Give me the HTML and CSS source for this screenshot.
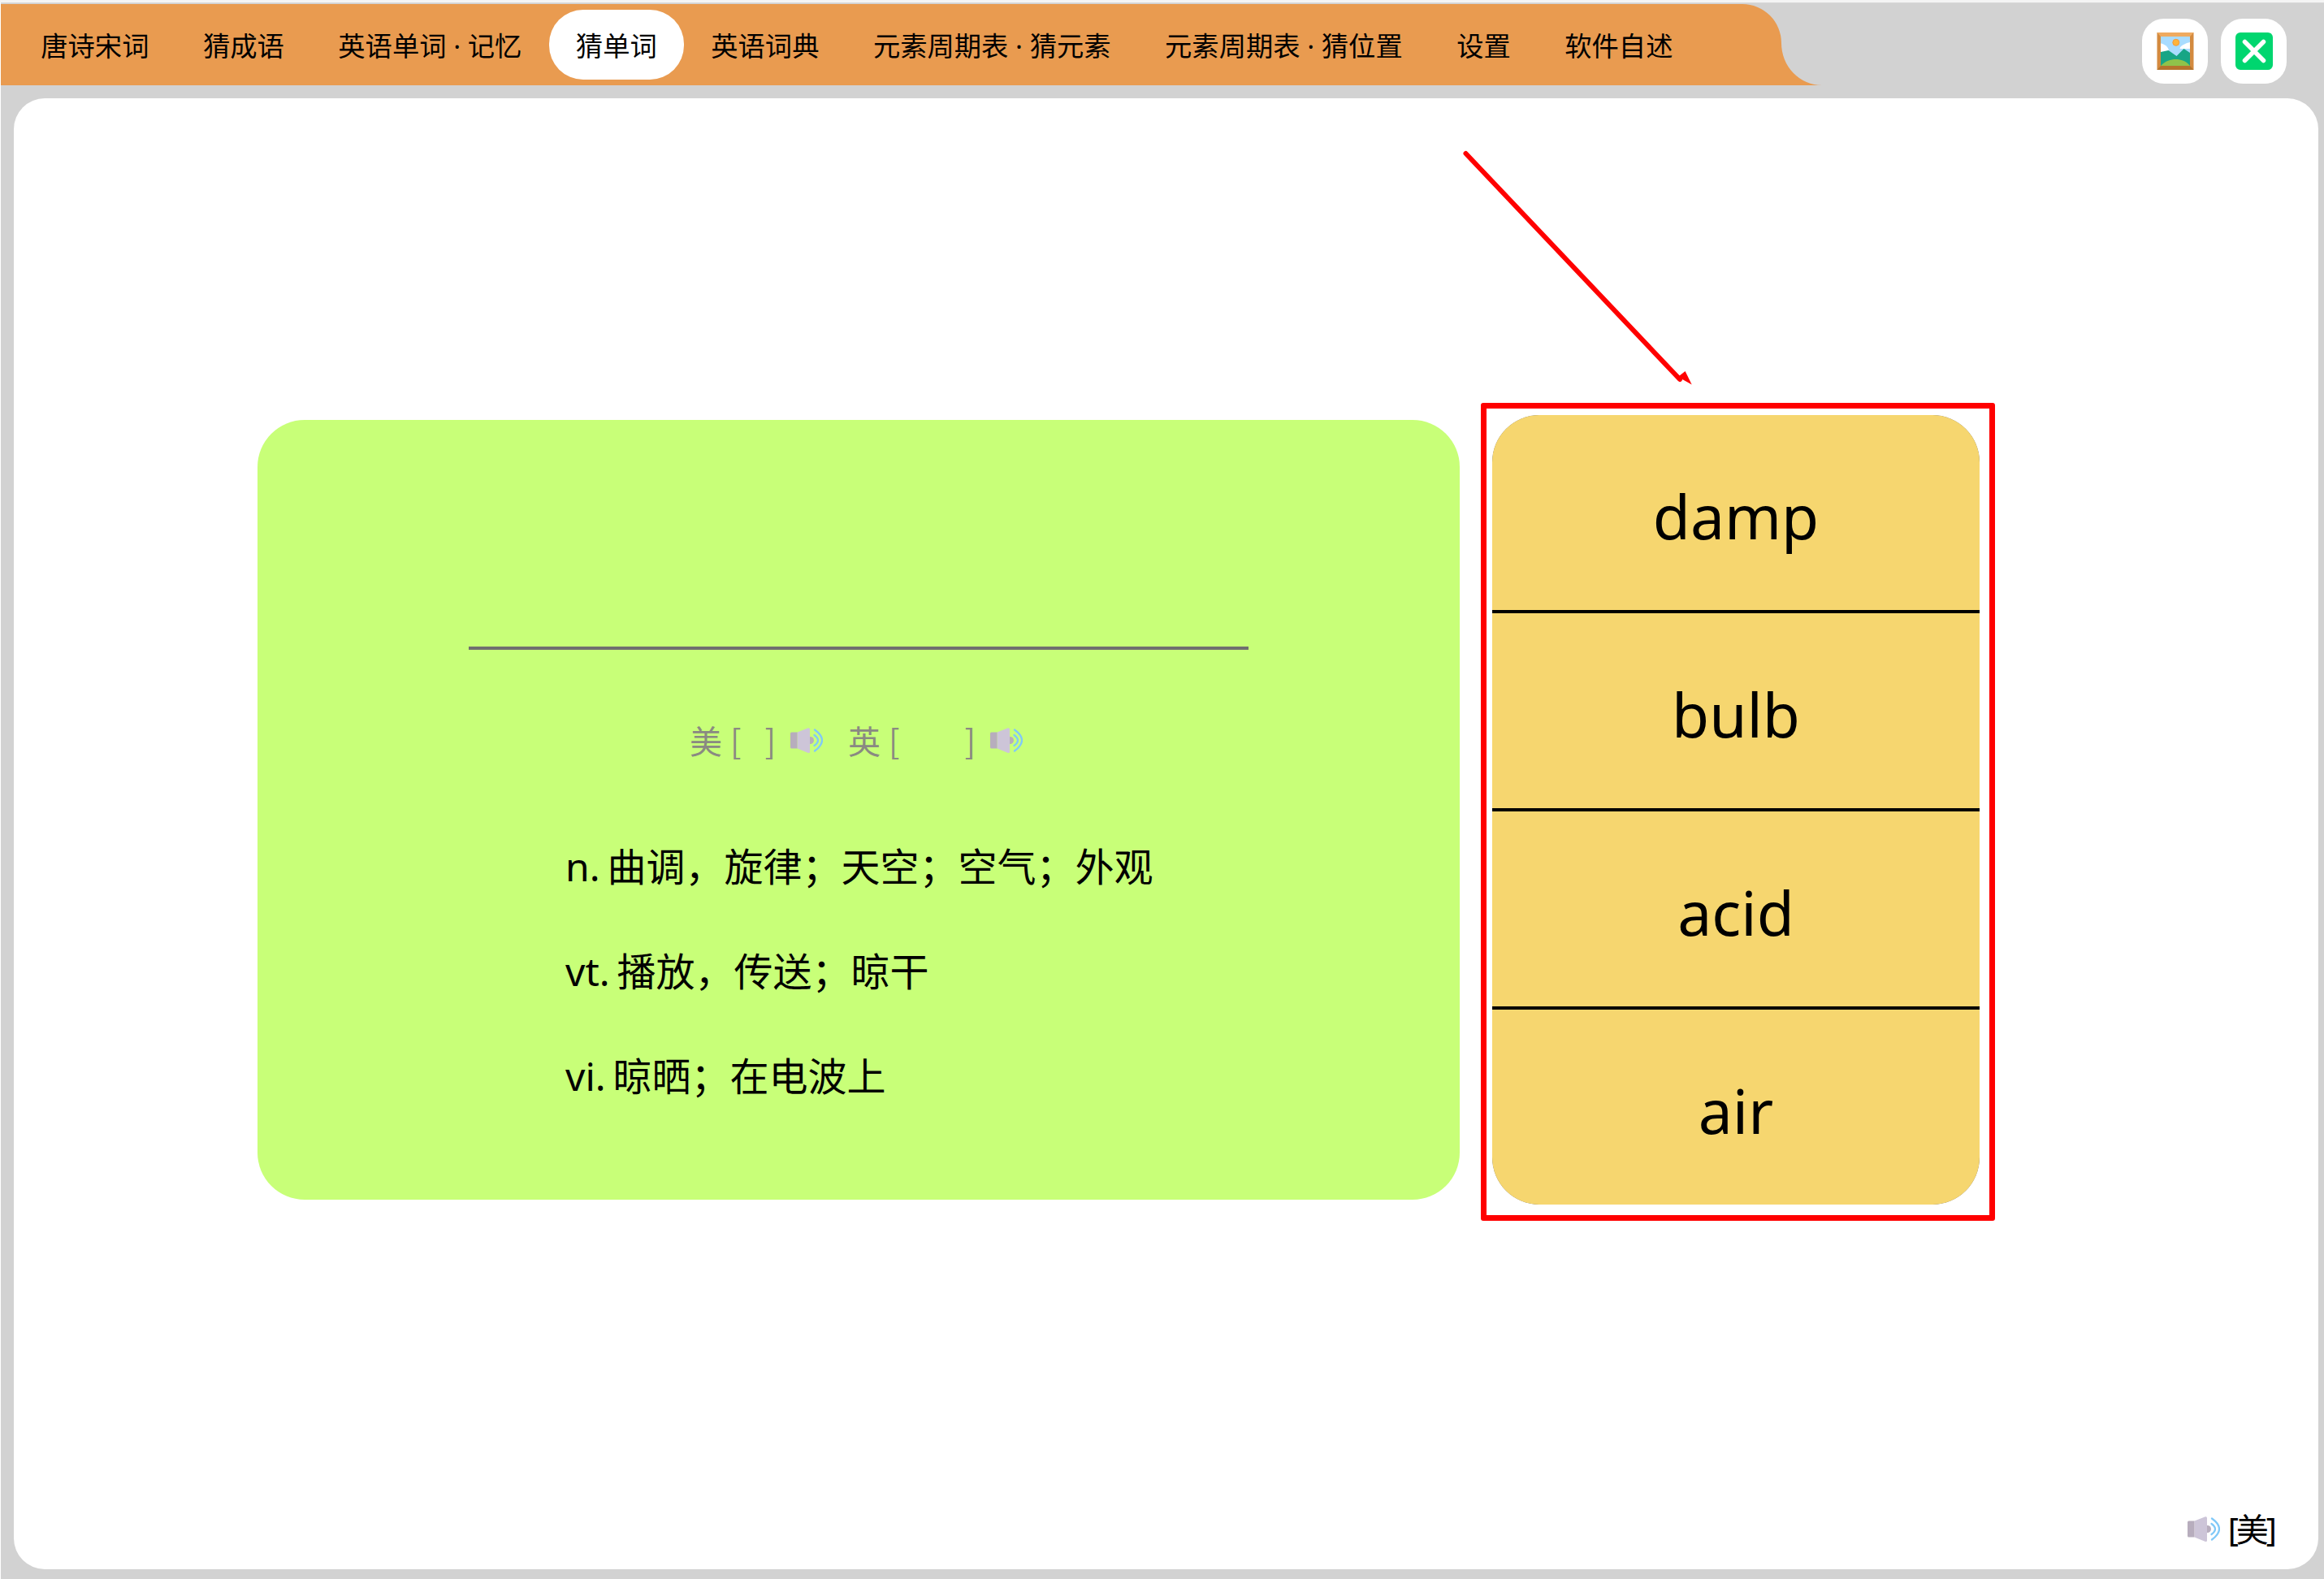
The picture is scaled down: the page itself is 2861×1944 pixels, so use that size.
FILE: index.html
```html
<!DOCTYPE html>
<html lang="zh-CN">
<head>
<meta charset="utf-8">
<title>猜单词</title>
<link rel="stylesheet" href="styles.css">
</head>
<body>
<div class="app">
  <header class="header">
    <nav class="tabs">
      <a class="tab">唐诗宋词</a>
      <a class="tab">猜成语</a>
      <a class="tab">英语单词 · 记忆</a>
      <a class="tab active">猜单词</a>
      <a class="tab">英语词典</a>
      <a class="tab">元素周期表 · 猜元素</a>
      <a class="tab">元素周期表 · 猜位置</a>
      <a class="tab">设置</a>
      <a class="tab">软件自述</a>
    </nav>
    <div class="actions">
      <button class="icon-btn">
        <svg class="icon" viewBox="0 0 45 46">
          <rect width="45" height="46" fill="#d38a3f"/>
          <path d="M0 0H45L40.5 5H4.5Z" fill="#efaa5f"/>
          <path d="M0 46H45L40.5 41H4.5Z" fill="#b5742d"/>
          <rect x="4.5" y="5" width="36" height="36" fill="#a9dcff"/>
          <circle cx="23.3" cy="12.3" r="4" fill="#ffb43a" stroke="#f59a3c" stroke-width="1"/>
          <path d="M4.5 13.500C9 14 14.500 18 14.500 23L4.500 25Z" fill="#fff"/>
          <path d="M28 20C28 16 36 13 40.500 12V20Z" fill="#fff"/>
          <path d="M4.500 24L14 22L24 29L33 20L40.500 25V41H4.500Z" fill="#17a585"/>
          <path d="M4.500 41C10 35 17 33 23 33C29 33 36 35 40.500 41Z" fill="#8fc34a"/>
        </svg>
      </button>
      <button class="icon-btn">
        <svg class="icon" viewBox="0 0 46 46">
          <rect width="46" height="46" rx="6" fill="#00d66f"/>
          <path d="M11.500 11.500L34.500 34.500M34.500 11.500L11.500 34.500" stroke="#fff" stroke-width="5.500" stroke-linecap="round"/>
        </svg>
      </button>
    </div>
  </header>

  <main class="panel">
    <svg class="arrow" viewBox="0 0 320 300">
      <path d="M24.500 9L288 287" stroke="#f00" stroke-width="6" stroke-linecap="round"/>
      <path d="M302.700 293.400L285.700 284L294.600 277Z" fill="#f00"/>
    </svg>
    <div class="stage">
      <section class="word-card">
        <div class="blank"></div>
        <div class="phonetics">
          <span class="ph">美</span><span class="ph bracket-open">[</span><span class="gap-us"></span><span class="ph">]</span>
          <svg class="speaker sp-a" viewBox="0 0 40 32"><use href="#spk"/></svg>
          <span class="ph uk">英</span><span class="ph bracket-open">[</span><span class="gap-uk"></span><span class="ph">]</span>
          <svg class="speaker sp-a" viewBox="0 0 40 32"><use href="#spk"/></svg>
        </div>
        <p class="def">n. 曲调，旋律；天空；空气；外观</p>
        <p class="def">vt. 播放，传送；晾干</p>
        <p class="def">vi. 晾晒；在电波上</p>
      </section>
      <section class="choice-box">
        <div class="choices">
          <div class="choice">damp</div>
          <div class="choice">bulb</div>
          <div class="choice">acid</div>
          <div class="choice">air</div>
        </div>
      </section>
    </div>
    <div class="accent">
      <svg class="speaker" viewBox="0 0 40 32"><use href="#spk"/></svg>
      <span class="accent-label">[美]</span>
    </div>
  </main>
</div>

<svg class="defs" width="0" height="0">
  <defs>
    <g id="spk">
      <circle cx="24.500" cy="15.500" r="4.500" fill="#b7adbd"/>
      <path d="M8.500 5.500L22 0.300Q24 0 24 2V29.500Q24 31.500 22 31L8.500 25.500Z" fill="#cdc5d8"/>
      <path d="M8.500 5.500H1.500Q0 5.500 0 7V24Q0 25.500 1.500 25.500H8.500Z" fill="#b7adbd"/>
      <path d="M29.500 9Q38.500 15.500 29.500 22" fill="none" stroke="#80c9f8" stroke-width="2.300" stroke-linecap="round"/>
      <path d="M30 2.500Q48 15.500 30 28.500" fill="none" stroke="#80c9f8" stroke-width="2.300" stroke-linecap="round"/>
    </g>
  </defs>
</svg>
</body>
</html>
```
FILE: styles.css
```css
* { box-sizing: border-box; }

html, body { margin: 0; height: 100%; }

body {
  background: #f4f4f4;
  padding-top: 3px;
  font-family: "Noto Sans", "Noto Sans CJK SC", sans-serif;
  color: #000;
}

.app {
  height: 1941px;
  margin-left: 1px;
  border-top: 1px solid #d8d8d8;
  background: #d2d2d2;
  display: flex;
  flex-direction: column;
  box-shadow: -1px 0 0 #fff;
}

.header {
  display: flex;
  justify-content: space-between;
  align-items: flex-start;
  height: 117px;
  padding-top: 1px;
  padding-right: 46px;
  flex: none;
}

.tabs {
  width: 2242px;
  height: 100px;
  padding: 7px 16px;
  display: flex;
  align-items: flex-start;
  background: #e99b50;
  clip-path: path("M0 0H2144A48 48 0 0 1 2192 48A50 52 0 0 0 2242 100H0Z");
}

.tab {
  height: 86px;
  padding: 0 33.25px;
  border-radius: 42px;
  font-size: 33.3px;
  line-height: 89px;
  white-space: nowrap;
}

.tab.active { background: #fff; }

.actions {
  display: flex;
  gap: 16px;
  margin-top: 18px;
}

.icon-btn {
  width: 81px;
  height: 80px;
  padding: 0;
  border: 0;
  border-radius: 27px;
  background: #fff;
  display: flex;
  align-items: center;
  justify-content: center;
}

.icon { width: 46px; height: 46px; display: block; }

.panel {
  position: relative;
  flex: none;
  width: 2837px;
  height: 1811px;
  margin-left: 16px;
  border-radius: 38px;
  background: #fff;
  display: flex;
  flex-direction: column;
}

.arrow {
  position: absolute;
  left: 1763px;
  top: 59px;
  width: 320px;
  height: 300px;
  overflow: visible;
}

.stage {
  display: flex;
  align-items: flex-start;
  gap: 26px;
  padding: 375px 0 0 300px;
}

.word-card {
  width: 1480px;
  height: 960px;
  margin-top: 21px;
  border-radius: 58px;
  background: #c8ff78;
}

.blank {
  width: 960px;
  height: 4px;
  margin: 279px 0 0 260px;
  background: #6f6f6f;
}

.phonetics {
  display: flex;
  align-items: center;
  height: 64px;
  margin: 79px 0 0 532px;
  color: #8a8a82;
  font-size: 40px;
  font-family: "Noto Sans CJK SC", sans-serif;
}

.ph { line-height: 64px; }
.bracket-open { margin-left: 10px; }
.gap-us { width: 29px; }
.gap-uk { width: 80px; }
.uk { margin-left: 31px; }
.sp-a { margin: 2px 0 0 18px; }

.speaker { width: 40px; height: 32px; flex: none; }

.def {
  margin: 0 0 0 379px;
  font-size: 48px;
  line-height: 129px;
  word-spacing: -3.5px;
}

.phonetics + .def { margin-top: 59px; }

.choice-box {
  width: 633px;
  padding: 8px 12px 13px 7px;
  border: 7px solid #f00;
  border-radius: 3px;
}

.choices {
  width: 600px;
  border-radius: 58px;
  overflow: hidden;
  background: #9c8d5f;
}

.choice {
  height: 244px;
  padding-top: 8px;
  display: flex;
  align-items: center;
  justify-content: center;
  background: #f6d66f;
  border-bottom: 4px solid #000;
  font-size: 75px;
  line-height: 1;
}

.choice:first-child { border-radius: 58px 58px 0 0; }
.choice:last-child { border-bottom: 0; border-radius: 0 0 58px 58px; height: 240px; }

.accent {
  margin: auto 54px 27px auto;
  display: flex;
  align-items: center;
  gap: 10px;
}

.accent-label {
  font-size: 40px;
  line-height: 44px;
  letter-spacing: -3px;
}

.defs { position: absolute; }
```
